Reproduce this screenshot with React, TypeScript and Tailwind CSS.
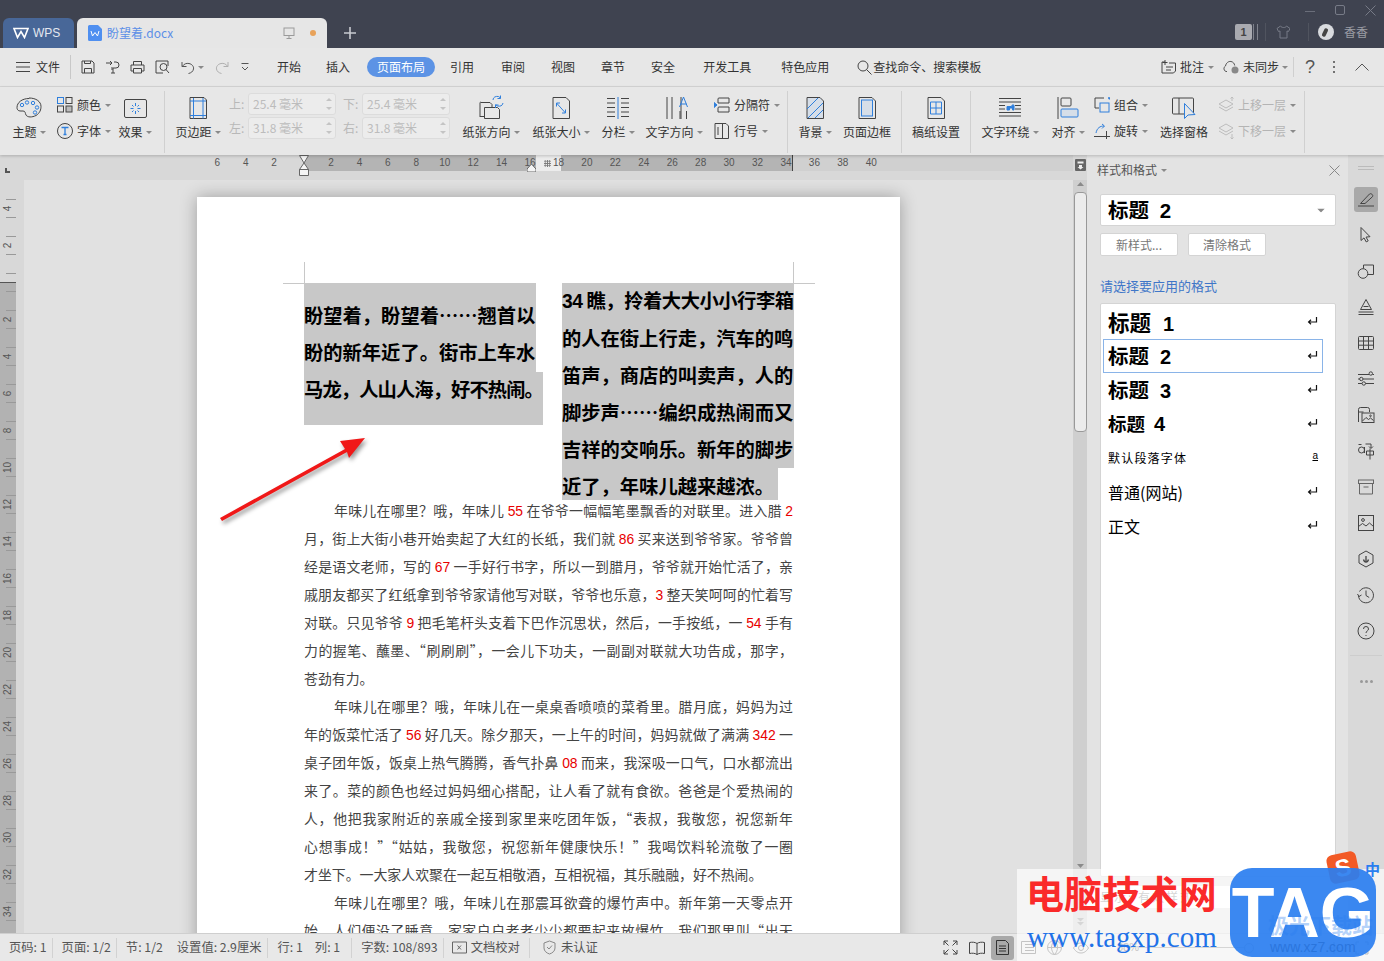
import type { FC, ReactNode } from 'react'

const BLUE = '#2f7fdc'
const INK = '#444'

const Svg: FC<{ w?: number; h?: number; stroke?: string; className?: string; children: ReactNode }> = ({ w = 16, h = 16, stroke = INK, className, children }) => (
  <svg width={w} height={h} viewBox={`0 0 ${w} ${h}`} fill="none" stroke={stroke} strokeWidth={1} className={`block shrink-0 ${className ?? ''}`}>
    {children}
  </svg>
)

const Caret: FC<{ className?: string }> = ({ className }) => (
  <svg width={6} height={3} viewBox="0 0 6 3" className={`block shrink-0 ${className ?? ''}`}><path d="M0 0h6L3 3z" fill="#8a8a8a" /></svg>
)

// big ribbon button: icon on top, label under it
const Big: FC<{ label: string; caret?: boolean; className: string; children: ReactNode }> = ({ label, caret, className, children }) => (
  <div className={`flex shrink-0 flex-col items-center ${className}`}>
    <div className="flex h-[36px] items-center pt-[6px]">{children}</div>
    <div className="flex h-[18px] items-center gap-[3px] whitespace-nowrap text-[12px] text-[#333]">
      {label}
      {caret && <Caret />}
    </div>
  </div>
)

const Small: FC<{ label: string; muted?: boolean; children: ReactNode }> = ({ label, muted, children }) => (
  <div className={`flex h-[18px] items-center whitespace-nowrap text-[12px] ${muted ? 'text-[#b4b4b4]' : 'text-[#333]'}`}>
    <div className="flex w-[20px] items-center">{children}</div>
    <span>{label}</span>
    <Caret className="ml-[4px]" />
  </div>
)

const Sep = () => <div className="mt-[4px] h-[62px] w-px shrink-0 bg-[#d0d0d0]" />

const Field: FC<{ label: string; value: string }> = ({ label, value }) => (
  <div className="flex items-center">
    <span className="w-[19px] text-[12px] text-[#b8b8b8]">{label}</span>
    <div className="flex h-[22px] w-[88px] items-center justify-between rounded-[3px] border border-[#dcdcdc] bg-[#ececec] pl-[4px] pr-[3px] text-[12px] text-[#bcbcbc]">
      {value}
      <div className="flex flex-col gap-[6px]">
        <svg width={6} height={3} viewBox="0 0 6 3"><path d="M3 0l3 3H0z" fill="#c4c4c4" /></svg>
        <svg width={6} height={3} viewBox="0 0 6 3"><path d="M0 0h6L3 3z" fill="#c4c4c4" /></svg>
      </div>
    </div>
  </div>
)

const HRULER = ['6', '4', '2', '', '2', '4', '6', '8', '10', '12', '14', '16', '18', '20', '22', '24', '26', '28', '30', '32', '34', '36', '38', '40']
const VRULER = ['4', '2', '', '2', '4', '6', '8', '10', '12', '14', '16', '18', '20', '22', '24', '26', '28', '30', '32', '34']

const R: FC<{ children: ReactNode }> = ({ children }) => <span className="font-['Liberation_Sans',sans-serif] text-[#e80000]">{children}</span>

const Line: FC<{ indent?: boolean; last?: boolean; children: ReactNode }> = ({ indent, last, children }) => (
  <div className={`h-[28px] whitespace-nowrap leading-[28px] ${indent ? 'pl-[30px]' : ''} ${last ? '' : '[text-align-last:justify]'}`}>{children}</div>
)

const STYLES = [
  { name: '标题', n: '1', cls: 'text-[21.5px] font-bold', numCls: 'ml-[12px]' },
  { name: '标题', n: '2', cls: 'text-[20.5px] font-bold', numCls: 'ml-[11px]', selected: true },
  { name: '标题', n: '3', cls: 'text-[20.5px] font-bold', numCls: 'ml-[11px]' },
  { name: '标题', n: '4', cls: 'text-[18.5px] font-bold', numCls: 'ml-[9px]' },
  { name: '默认段落字体', cls: 'text-[12px] tracking-[1.2px]', a: true },
  { name: '普通(网站)', cls: 'text-[16px]' },
  { name: '正文', cls: 'text-[16px]' },
]

const ReturnMark = () => (
  <Svg w={11} h={10} stroke="#111" className="-mt-[3px] [&_path]:[stroke-width:1.2]"><path d="M9.5 1v5H2M4 3.800L1.600 6 4 8.200" /></Svg>
)

const RAIL: ReactNode[] = [
  <Svg w={18} h={18} stroke="#444"><path d="M3.500 13.500L12.500 4c1.200-1.200 4.300 1 3 2.700L8 13.500zM1 16h16" /></Svg>,
  <Svg w={18} h={18}><path d="M4 1.500v13l3-2.600 2.200 4 2-1-2.200-3.800 4-.4z" /></Svg>,
  <Svg w={18} h={18}><circle cx="6" cy="11.500" r="4.800" /><path d="M6.500 6.500V3h10v9.500H11" /></Svg>,
  <Svg w={18} h={18}><path d="M9 1.500L14.500 11.500H3.500zM6.500 8.500h5M1.500 14h15M1.500 16.500h15" /></Svg>,
  <Svg w={18} h={18}><rect x="1.500" y="2.500" width="15" height="13" rx="1" /><path d="M1.500 7h15M1.500 11.200h15M6.500 2.500v13M11.500 2.500v13" /></Svg>,
  <Svg w={18} h={18}><path d="M1 4.500h11M15.500 4.500h1.500M1 9h1.500M6 9h11M1 13.500h4M8.500 13.500h8.500" /><circle cx="13.800" cy="3.500" r="1.700" /><circle cx="4.300" cy="9" r="1.700" /><circle cx="6.800" cy="13.500" r="1.700" /></Svg>,
  <Svg w={18} h={18}><path d="M1.500 16V3.500a2 2 0 012-2h7a2 2 0 012 2V6M1.500 6h5" /><rect x="5" y="7" width="12" height="9.500" /><path d="M5.500 15l3.500-3.500 2.500 2 2-1.500 3 2.500" /><circle cx="13.500" cy="9.800" r=".8" /></Svg>,
  <Svg w={18} h={18}><circle cx="4.500" cy="8" r="3" /><path d="M7.500 5v6M1.500 2.500h3M8.500 2h5.500v4M12 4.500L14 6.500 16 4.500M9.500 9h7v4h-7zM13 6.500v11" /></Svg>,
  <Svg w={18} h={18} stroke="#666"><rect x="1.500" y="2" width="15" height="3.500" /><path d="M2.500 5.500V16h13V5.500M6.500 9h5" /></Svg>,
  <Svg w={18} h={18}><rect x="1.500" y="1.500" width="15" height="15" /><circle cx="6" cy="6" r="1.400" /><path d="M1.500 12.500l4-3 3.500 2.500 3.500-3 4 3.500" /></Svg>,
  <Svg w={18} h={18}><path d="M9 1l7 4v8l-7 4-7-4V5z" /><path d="M9 6v5M6.500 9.500c.5 2 1.500 2.500 2.500 2.500s2-.5 2.500-2.500" strokeWidth={1.300} /></Svg>,
  <Svg w={18} h={18}><path d="M2.500 5.500A7.500 7.500 0 111.500 10M.5 8l1.500 2.500L4.500 9M9 4.500V9.500l3.200 2" /></Svg>,
  <Svg w={18} h={18}><circle cx="9" cy="9" r="8" /><path d="M6.500 7a2.500 2.500 0 115 0c0 1.800-2.500 2-2.500 4M9 13v1" /></Svg>,
]

export default function App() {
  return (
    <div className="relative flex h-[961px] w-[1384px] flex-col overflow-hidden bg-[#e0e0e0] font-['Noto_Sans_CJK_SC','Noto_Sans',sans-serif]">
      {/* Title bar */}
      <header className="flex h-[48px] shrink-0 items-end bg-[#3f4350]">
        <div className="ml-[3px] flex h-[30px] w-[71px] items-center gap-[4px] rounded-t-[6px] bg-[#486798] pl-[10px] font-['Liberation_Sans',sans-serif] text-[12px] text-[#e4e8f0]">
          <Svg w={16} h={12} stroke="#fff" className="[&_path]:[stroke-width:1.6]"><path d="M1 1.500h14l-3.500 9L8 4.500l-3.500 6z" /></Svg>
          WPS
        </div>
        <div className="ml-[3px] flex h-[30px] w-[250px] items-center rounded-t-[6px] bg-[#e6e6e6] pl-[11px]">
          <svg width={14} height={16} viewBox="0 0 14 16" className="block shrink-0"><path d="M1.500 0H10l4 4v10.500a1.500 1.500 0 01-1.500 1.500h-11A1.500 1.500 0 010 14.500v-13A1.500 1.500 0 011.500 0z" fill="#4f8ff0" /><path d="M3 6l1.500 5L7 7.500 9.500 11 11 6" stroke="#fff" fill="none" /></svg>
          <span className="ml-[5px] text-[12px] text-[#5c8fe6]">盼望着.docx</span>
          <Svg w={12} h={12} stroke="#9a9a9a" className="ml-[110px]"><rect x="1" y="1" width="10" height="7.500" /><path d="M6 8.500V11M3.500 11.500h5" /></Svg>
          <div className="ml-[15px] h-[6px] w-[6px] rounded-full bg-[#e8a25a]" />
        </div>
        <Svg w={12} h={12} stroke="#c8cad0" className="mb-[9px] ml-[17px] [&_path]:[stroke-width:1.6]"><path d="M6 0v12M0 6h12" /></Svg>
        <div className="ml-auto flex h-full flex-col pr-[8px]">
          <div className="flex h-[20px] items-center justify-end gap-[20px]">
            <div className="h-px w-[10px] translate-y-[1px] bg-[#6a6e7a]" />
            <div className="h-[10px] w-[10px] rounded-[2px] border border-[#777b87]" />
            <Svg w={11} h={11} stroke="#777b87"><path d="M0.500 0.500l10 10M10.500 0.500l-10 10" /></Svg>
          </div>
          <div className="flex h-[26px] items-center pb-[2px]">
            <div className="flex h-[16px] w-[17px] items-center justify-center rounded-[2px] bg-[#a9aab0] font-['Liberation_Sans',sans-serif] text-[11px] font-bold text-[#444]">1</div>
            <div className="ml-px h-[16px] w-[5px] border-x border-[#7f828c]" />
            <div className="ml-[7px] h-[18px] w-px bg-[#50545f]" />
            <Svg w={14} h={14} stroke="#777b87" className="ml-[10px]"><path d="M4.500 1L1 3.500l1.500 3L4 6v7h7V6l1.500.5L14 3.500 10.500 1c-.5 2-5 2-6 0z" /></Svg>
            <div className="ml-[18px] h-[18px] w-px bg-[#50545f]" />
            <div className="relative ml-[9px] h-[16px] w-[16px] rounded-full bg-[#d8dade]"><div className="absolute left-[5px] top-[4px] h-[9px] w-[4px] rotate-[25deg] rounded-full bg-[#444]" /></div>
            <span className="ml-[10px] text-[12px] text-[#9a9ca4]">香香</span>
            <div className="w-[8px]" />
          </div>
        </div>
      </header>

      {/* Menu row */}
      <div className="flex h-[39px] shrink-0 items-center border-b border-[#d6d6d6] bg-[#e7e7e7] text-[12px] text-[#333]">
        <Svg w={14} h={10} className="ml-[16px]"><path d="M0 .5h14M0 5h14M0 9.500h14" /></Svg>
        <span className="ml-[6px]">文件</span>
        <div className="ml-[10px] h-[24px] w-px bg-[#c8c8c8]" />
        <Svg w={14} h={14} className="ml-[10px]"><path d="M1 1h10l2 2v10H1zM3.500 13V8.500h7V13M3.500 1v2.500h6V1" /></Svg>
        <Svg w={14} h={14} className="ml-[11px]"><path d="M0 3h6M4 1l2 2-2 2M8 2h2a3 3 0 010 6H7v5M5 13h4M6 7v3" /></Svg>
        <Svg w={15} h={14} className="ml-[10px]"><path d="M3.500 5V1.500h8V5M3.500 11H1V5h13v6h-2.500M3.500 8.500h8V13h-8z" /></Svg>
        <Svg w={15} h={14} className="ml-[10px]"><path d="M13 6V1H1v12h7" /><circle cx="8.500" cy="7" r="3.500" /><path d="M11 9.500l3 3.500" /></Svg>
        <Svg w={14} h={13} stroke="#555" className="ml-[11px]"><path d="M1 1v4.500h4.500M1.200 5.500C3 2.800 5.500 2 8 2.500c3 .6 5 3 4.500 5.500-.4 2.500-2.500 4-5 4.500" /></Svg>
        <Caret className="ml-[3px]" />
        <Svg w={14} h={13} stroke="#b0b0b0" className="ml-[11px]"><path d="M13 1v4.500H8.500M12.800 5.500C11 2.800 8.500 2 6 2.500 3 3.100 1 5.500 1.500 8c.4 2.500 2.500 4 5 4.500" /></Svg>
        <Svg w={8} h={8} stroke="#555" className="ml-[12px]"><path d="M0.500 .5h7M1 4l3 3 3-3" /></Svg>
        <span className="ml-[28px]">开始</span>
        <span className="ml-[25px]">插入</span>
        <span className="ml-[17px] flex h-[20px] w-[68px] items-center justify-center rounded-full bg-[#5c93e5] text-white">页面布局</span>
        <span className="ml-[15px]">引用</span>
        <span className="ml-[27px]">审阅</span>
        <span className="ml-[26px]">视图</span>
        <span className="ml-[26px]">章节</span>
        <span className="ml-[26px]">安全</span>
        <span className="ml-[28px]">开发工具</span>
        <span className="ml-[30px]">特色应用</span>
        <Svg w={15} h={15} className="ml-[28px]"><circle cx="6" cy="6" r="5" /><path d="M9.500 9.500l5 5" /></Svg>
        <span className="ml-px">查找命令、搜索模板</span>
        <div className="ml-auto flex items-center">
          <Svg w={16} h={14}><path d="M4 2H1v11h11.500l2-2V3H8M4 0v5M1.500 2.500h5M5 7h7M5 10h5" /></Svg>
          <span className="ml-[3px]">批注</span>
          <Caret className="ml-[4px]" />
          <Svg w={17} h={14} stroke="#555" className="ml-[9px]"><path d="M4 11.500H3a3 3 0 01-.5-5.500C3 3 5.500 1 8 1.500c2 .3 3.500 2 3.700 4" /><circle cx="12" cy="10" r="3.500" fill="#888" stroke="none" /></Svg>
          <span className="ml-[3px]">未同步</span>
          <Caret className="ml-[3px]" />
          <div className="ml-[5px] h-[20px] w-px bg-[#cfcfcf]" />
          <span className="ml-[11px] font-['Liberation_Sans',sans-serif] text-[18px] text-[#555]">?</span>
          <Svg w={4} h={14} stroke="#555" className="ml-[17px] [&_path]:[stroke-width:1.6]"><path d="M2 1v2M2 6v2M2 11v2" /></Svg>
          <Svg w={14} h={8} stroke="#555" className="ml-[19px] mr-[15px]"><path d="M0.500 7.500L7 1l6.500 6.500" /></Svg>
        </div>
      </div>

      {/* Ribbon */}
      <div className="relative z-10 flex h-[68px] shrink-0 bg-[#e7e7e7] shadow-[0_1px_3px_rgba(0,0,0,0.2)]">
        <Big label="主题" caret className="ml-[8px] w-[42px]">
          <Svg w={26} h={22}><path d="M13 1.500C6 1.500 1 5.500 1 10.500c0 4 3.500 3.500 6 3.500 2.500 0 2 2 3 4 1.500 2.500 6 2.500 10 .5 4-2.500 5-6 5-9 0-5-5-8.500-12-8.500z" /><circle cx="6" cy="8" r="1.700" stroke={BLUE} /><circle cx="11" cy="5.500" r="1.700" stroke={BLUE} /><circle cx="17" cy="6" r="1.700" stroke={BLUE} /><circle cx="21" cy="10.500" r="1.700" stroke={BLUE} /><circle cx="19" cy="15.500" r="1.700" stroke={BLUE} /></Svg>
        </Big>
        <div className="ml-[7px] flex w-[58px] shrink-0 flex-col gap-[8px] pt-[9px]">
          <Small label="颜色">
            <Svg w={16} h={16}><rect x=".5" y=".5" width="6" height="6" stroke={BLUE} /><rect x="9" y=".5" width="6" height="6" /><rect x=".5" y="9" width="6" height="6" /><rect x="9" y="9" width="6" height="6" fill="#bbb" /></Svg>
          </Small>
          <Small label="字体">
            <Svg w={16} h={16}><circle cx="8" cy="8" r="7.500" /><path d="M4.500 4.500h7M8 4.500v7M6.500 11.500h3" stroke={BLUE} strokeWidth={1.300} /></Svg>
          </Small>
        </div>
        <Big label="效果" caret className="w-[40px]">
          <Svg w={23} h={19}><rect x=".5" y=".5" width="22" height="18" rx="1.500" /><path d="M11.500 4v3M11.500 12v3M6.500 9.500h3M13.500 9.500h3M8 6l1.500 1.500M15 6l-1.500 1.500M8 13l1.500-1.500M15 13l-1.500-1.500" stroke={BLUE} /></Svg>
        </Big>
        <div className="ml-[9px]"><Sep /></div>
        <Big label="页边距" caret className="ml-[3px] w-[60px]">
          <Svg w={18} h={22}><path d="M1 .5h14l2.500 2.500v18.500H1z" /><path d="M4.500 1v20.500M14 1v20.500M1 4h16M1 18.500h16" stroke={BLUE} /></Svg>
        </Big>
        <div className="ml-px flex shrink-0 flex-col gap-[2px] pt-[6px]">
          <div className="flex gap-[7px]"><Field label="上:" value="25.4 毫米" /><Field label="下:" value="25.4 毫米" /></div>
          <div className="flex gap-[7px]"><Field label="左:" value="31.8 毫米" /><Field label="右:" value="31.8 毫米" /></div>
        </div>
        <Big label="纸张方向" caret className="ml-[11px] w-[60px]">
          <Svg w={25} h={26}><path d="M2 7.500h9l2 2v3.500M1 8v14M1 8a1 1 0 011-1" /><path d="M5.500 12.500h13l2 2v9h-15z M1 21.500h4" /><path d="M14 5c0-3 3-4 5.500-3.500l2 1.500M21.500 .5v3h-3M24 8c-.5 3-3 3.500-5.500 3l-2-1.500M16.500 13v-3h3" stroke={BLUE} /></Svg>
        </Big>
        <Big label="纸张大小" caret className="ml-[10px] w-[60px]">
          <Svg w={18} h={22}><path d="M1 .5h13l3.500 3.500v17.500H1z" /><path d="M4.500 6l9 10M4.500 6v3.500M4.500 6H8M13.500 16v-3.500M13.500 16H10" stroke={BLUE} /></Svg>
        </Big>
        <Big label="分栏" caret className="ml-[5px] w-[44px]">
          <Svg w={24} h={22}><path d="M1 1.500h8M1 6h8M1 10.500h8M1 15h8M1 19.500h8M15 1.500h8M15 6h8M15 10.500h8M15 15h8M15 19.500h8" /><path d="M12 0v22" stroke={BLUE} /></Svg>
        </Big>
        <Big label="文字方向" caret className="ml-[4px] w-[60px]">
          <Svg w={22} h={22} className="ml-[6px]"><path d="M1 0v22M6 0v22M15 0v22M20 0" /><path d="M13.500 10L17.500 0l4 10M14.500 7h6" stroke={BLUE} /><path d="M14 14v8M20.500 14v8" /></Svg>
        </Big>
        <div className="ml-[10px] flex w-[68px] shrink-0 flex-col gap-[8px] pt-[9px]">
          <Small label="分隔符">
            <Svg w={16} h={16}><path d="M4 6V2a1 1 0 011-1h10v5H4M4 15v-4a1 1 0 011-1h10v5H4" /><path d="M0 5.500l3 2.500-3 2.500z" fill={BLUE} stroke={BLUE} /></Svg>
          </Small>
          <Small label="行号">
            <Svg w={15} h={16}><path d="M1 .5h11l2.500 2.500v12.500H1z" /><path d="M8.500 1v14M4 4v8" /></Svg>
          </Small>
        </div>
        <div className="ml-[5px]"><Sep /></div>
        <Big label="背景" caret className="ml-[5px] w-[44px]">
          <Svg w={18} h={22}><path d="M1 .5h13l3.500 3.500v17.500H1z" fill="#d6dee8" /><path d="M1 12L12 1M2 21L17 6M9 21l8-8" stroke={BLUE} /></Svg>
        </Big>
        <Big label="页面边框" className="ml-[5px] w-[50px]">
          <Svg w={18} h={22}><path d="M1 .5h13l3.500 3.500v17.500H1z" /><rect x="3.500" y="3" width="11" height="16" stroke={BLUE} fill="#d6dee8" /></Svg>
        </Big>
        <div className="ml-[9px]"><Sep /></div>
        <Big label="稿纸设置" className="ml-[9px] w-[50px]">
          <Svg w={18} h={22}><path d="M1 .5h13l3.500 3.500v17.500H1z" /><path d="M3.500 5h11v12h-11zM3.500 11h11M9 5v12" stroke={BLUE} /></Svg>
        </Big>
        <div className="ml-[9px]"><Sep /></div>
        <Big label="文字环绕" caret className="ml-[9px] w-[60px]">
          <Svg w={22} h={20}><path d="M0 .5h22M0 4h22M0 7.500h6M16 7.500h6M0 11h6M16 11h6M0 14.500h22M0 18h22" /><path d="M8 12V8.500h4l2-2 1 1v4.500h-1.500v-2h-3v2z" fill={BLUE} stroke={BLUE} /></Svg>
        </Big>
        <Big label="对齐" caret className="ml-[8px] w-[40px]">
          <Svg w={22} h={22}><path d="M1 0v22" /><rect x="4" y="1" width="10" height="8" rx="1" /><rect x="4" y="12" width="17" height="8" rx="1" fill="#d6dee8" stroke={BLUE} /></Svg>
        </Big>
        <div className="ml-[6px] flex w-[60px] shrink-0 flex-col gap-[8px] pt-[9px]">
          <Small label="组合">
            <Svg w={16} h={16}><path d="M10 1H1v10h4" /><rect x="6" y="6" width="9" height="9" stroke={BLUE} /><path d="M14 1h1.500v1.500" stroke={BLUE} strokeWidth={1.500} /></Svg>
          </Small>
          <Small label="旋转">
            <Svg w={16} h={16}><path d="M2 10C3 5 6 3 10 3M8 1l2.500 2L8 5.500" stroke={BLUE} /><path d="M0 13.500h16M12.500 8v8" /></Svg>
          </Small>
        </div>
        <Big label="选择窗格" className="ml-[5px] w-[50px]">
          <Svg w={24} h={22}><rect x=".5" y="1" width="21" height="16" rx="1" /><path d="M7 1v16" /><path d="M12.500 6.500v15l3.500-3.500 7-.5z" fill="#e7e7e7" stroke={BLUE} /></Svg>
        </Big>
        <div className="ml-[9px] flex w-[80px] shrink-0 flex-col gap-[8px] pt-[9px]">
          <Small label="上移一层" muted>
            <Svg w={17} h={16} stroke="#bdbdbd"><path d="M8 3l7 4-7 4-7-4zM1 10l7 4 7-4M14 4V0M12.500 1.500L14 0l1.500 1.500" /></Svg>
          </Small>
          <Small label="下移一层" muted>
            <Svg w={17} h={16} stroke="#bdbdbd"><path d="M8 1l7 4-7 4-7-4zM1 8l7 4 7-4M14 11v5M12.500 14.500L14 16l1.500-1.500" /></Svg>
          </Small>
        </div>
        <div className="ml-[6px]"><Sep /></div>
      </div>

      {/* Work area */}
      <div className="flex min-h-0 flex-1">
        <div className="flex w-[1087px] shrink-0 flex-col">
          {/* Horizontal ruler */}
          <div className="relative h-[25px] shrink-0 bg-[#d8d8d8]">
            <div className="flex h-[16px] bg-[linear-gradient(to_right,#d8d8d8_304px,#b4b4b4_304px,#b4b4b4_536px,#ececec_536px,#ececec_561px,#b4b4b4_561px,#b4b4b4_793px,#d0d0d0_793px,#d0d0d0_1073px,#d8d8d8_1073px)] pl-[203px] font-['Liberation_Sans',sans-serif] text-[10px] leading-[16px] text-[#555]">
              {HRULER.map((n, i) => <span key={i} className="w-[28.45px] shrink-0 text-center">{n}</span>)}
            </div>
            <div className="absolute left-[792px] top-0 h-[16px] w-px bg-[#444]" />
            <svg width={10} height={22} viewBox="0 0 10 22" className="absolute left-[299px] top-0"><path d="M.5.5h9L5 8zM5 8l4.500 6.500h-9zM.5 14.500h9v6h-9z" fill="#f4f4f4" stroke="#666" /></svg>
            <svg width={9} height={8} viewBox="0 0 9 8" className="absolute left-[527px] top-[9px]"><path d="M4.500 0L9 5v3H0V5z" fill="#f4f4f4" stroke="#666" /></svg>
            <div className="absolute left-[544px] top-[5px] h-[7px] w-[7px] bg-[radial-gradient(#777_1px,transparent_1px)] bg-[length:2.300px_2.300px]" />
            <div className="absolute left-[5px] top-[13px] h-[5px] w-[5px] border-b-2 border-l-2 border-[#555]" />
            <svg width={12} height={13} viewBox="0 0 12 13" className="absolute left-[1075px] top-[4px]"><rect width="11" height="12" rx="1" fill="#666" /><path d="M2.500 2.500h6v2h-6zM4 6h3v2h1.500L5.500 10.500 2.500 8H4z" fill="#eee" /></svg>
          </div>
          <div className="flex min-h-0 flex-1">
            {/* Vertical ruler */}
            <div className="h-full w-[24px] shrink-0 bg-[#d8d8d8]">
              <div className="h-full w-[16px] bg-[linear-gradient(to_bottom,#d8d8d8_102px,#555_102px,#555_103px,#b2b2b2_103px)] pt-[9.500px] font-['Liberation_Sans',sans-serif] text-[10px] text-[#555]">
                {VRULER.map((n, i) => (
                  <div key={i} className="flex h-[37px] flex-col items-end py-[9px]">
                    <div className="h-px w-[10px] bg-[#999]" />
                    <div className="flex w-[16px] flex-1 items-center justify-center pr-[1px]">
                      <span className="-rotate-90">{n}</span>
                    </div>
                    <div className="h-px w-[10px] bg-[#999]" />
                  </div>
                ))}
              </div>
            </div>
            {/* Page */}
            <div className="min-w-0 flex-1 overflow-hidden bg-[#e1e1e1] pl-[173px] pt-[17px]">
              <div className="relative h-[900px] w-[703px] bg-white pl-[107px] pt-[86px] shadow-[0_0_16px_rgba(0,0,0,0.3)]">
                <div className="absolute left-[107px] top-[65px] h-[21px] w-px bg-[#c8c8c8]" />
                <div className="absolute left-[86px] top-[86px] h-px w-[21px] bg-[#c8c8c8]" />
                <div className="absolute left-[596px] top-[65px] h-[21px] w-px bg-[#c8c8c8]" />
                <div className="absolute left-[596px] top-[86px] h-px w-[22px] bg-[#c8c8c8]" />
                <svg width={160} height={100} viewBox="0 0 160 100" className="absolute left-[20px] top-[235px] drop-shadow-[2px_3px_2px_rgba(0,0,0,0.4)]">
                  <path d="M3 86L128 17 123 9 148 6 132 26 130 20 5 89z" fill="#f01818" />
                </svg>
                <div className="flex h-[216px] gap-[19px] text-[19.300px] font-bold leading-[37px] text-black">
                  <div className="w-[239px] shrink-0">
                    <div className="h-[52px] w-[232px] whitespace-nowrap bg-[#c8c8c8] pt-[14px]">盼望着，盼望着……翘首以</div>
                    <div className="h-[37px] w-[232px] whitespace-nowrap bg-[#c8c8c8] leading-[35px]">盼的新年近了。街市上车水</div>
                    <div className="h-[53px] w-[239px] whitespace-nowrap bg-[#c8c8c8] leading-[35px] tracking-[-0.900px]">马龙，人山人海，好不热闹。</div>
                  </div>
                  <div className="w-[232px] shrink-0 bg-[linear-gradient(#c8c8c8_185px,transparent_185px)]">
                    <div className="-mt-px">
                      <div className="whitespace-nowrap tracking-[-0.450px]"><span className="font-['Liberation_Sans',sans-serif]">34</span> 瞧，拎着大大小小行李箱</div>
                      <div className="whitespace-nowrap">的人在街上行走，汽车的鸣</div>
                      <div className="whitespace-nowrap">笛声，商店的叫卖声，人的</div>
                      <div className="whitespace-nowrap">脚步声……编织成热闹而又</div>
                      <div className="whitespace-nowrap">吉祥的交响乐。新年的脚步</div>
                      <div className="h-[32px] w-[216px] whitespace-nowrap bg-[#c8c8c8]">近了，年味儿越来越浓。</div>
                    </div>
                  </div>
                </div>
                <div className="-mt-[3px] w-[489px] text-[13.900px] text-[#444]">
                  <Line indent>年味儿在哪里？哦，年味儿 <R>55</R> 在爷爷一幅幅笔墨飘香的对联里。进入腊 <R>2</R></Line>
                  <Line>月，街上大街小巷开始卖起了大红的长纸，我们就 <R>86</R> 买来送到爷爷家。爷爷曾</Line>
                  <Line>经是语文老师，写的 <R>67</R> 一手好行书字，所以一到腊月，爷爷就开始忙活了，亲</Line>
                  <Line>戚朋友都买了红纸拿到爷爷家请他写对联，爷爷也乐意，<R>3</R> 整天笑呵呵的忙着写</Line>
                  <Line>对联。只见爷爷 <R>9</R> 把毛笔杆头支着下巴作沉思状，然后，一手按纸，一 <R>54</R> 手有</Line>
                  <Line>力的握笔、蘸墨、“刷刷刷”，一会儿下功夫，一副副对联就大功告成，那字，</Line>
                  <Line last>苍劲有力。</Line>
                  <Line indent>年味儿在哪里？哦，年味儿在一桌桌香喷喷的菜肴里。腊月底，妈妈为过</Line>
                  <Line>年的饭菜忙活了 <R>56</R> 好几天。除夕那天，一上午的时间，妈妈就做了满满 <R>342</R> 一</Line>
                  <Line>桌子团年饭，饭桌上热气腾腾，香气扑鼻 <R>08</R> 而来，我深吸一口气，口水都流出</Line>
                  <Line>来了。菜的颜色也经过妈妈细心搭配，让人看了就有食欲。爸爸是个爱热闹的</Line>
                  <Line>人，他把我家附近的亲戚全接到家里来吃团年饭，“表叔，我敬您，祝您新年</Line>
                  <Line>心想事成！”“姑姑，我敬您，祝您新年健康快乐！”我喝饮料轮流敬了一圈</Line>
                  <Line last>才坐下。一大家人欢聚在一起互相敬酒，互相祝福，其乐融融，好不热闹。</Line>
                  <Line indent>年味儿在哪里？哦，年味儿在那震耳欲聋的爆竹声中。新年第一天零点开</Line>
                  <Line>始，人们便没了睡意，家家户户老老少少都要起来放爆竹。我们那里叫“出天</Line>
                </div>
              </div>
            </div>
            {/* Scrollbar */}
            <div className="flex h-full w-[14px] shrink-0 flex-col items-center bg-[#cfcfcf]">
              <svg width={7} height={4} viewBox="0 0 7 4" className="mt-[2px]"><path d="M3.500 0L7 4H0z" fill="#8a8a8a" /></svg>
              <div className="mt-[6px] h-[240px] w-[13px] rounded-[4px] border border-[#999] bg-[#ececec]" />
              <svg width={7} height={4} viewBox="0 0 7 4" className="mt-[432px]"><path d="M0 0h7L3.500 4z" fill="#8a8a8a" /></svg>
              <svg width={7} height={8} viewBox="0 0 7 8" className="mt-[50px]"><path d="M0 0h7L3.500 3.500zM0 4h7L3.500 7.500z" fill="#8a8a8a" /></svg>
            </div>
          </div>
        </div>

        {/* Styles panel */}
        <aside className="flex w-[261px] shrink-0 flex-col bg-[#e3e3e3] pl-[13px] pr-[12px]">
          <div className="-ml-[3px] -mr-[4px] flex h-[30px] shrink-0 items-center text-[12px] text-[#555]">
            样式和格式
            <Caret className="ml-[4px]" />
            <Svg w={11} h={11} stroke="#888" className="ml-auto"><path d="M.5.5l10 10M10.500.5l-10 10" /></Svg>
          </div>
          <div className="mt-[9px] flex h-[32px] shrink-0 items-center justify-between rounded-[2px] border border-[#d4d4d4] bg-white pl-[7px] pr-[11px] text-[20.500px] font-bold text-black">
            <span>标题 <span className="ml-[6px] font-['Liberation_Sans',sans-serif]">2</span></span>
            <Caret className="scale-[1.300]" />
          </div>
          <div className="mt-[7px] flex shrink-0 gap-[10px]">
            <div className="flex h-[23px] w-[78px] items-center justify-center rounded-[2px] border border-[#d4d4d4] bg-white text-[12px] text-[#777]">新样式...</div>
            <div className="flex h-[23px] w-[78px] items-center justify-center rounded-[2px] border border-[#d4d4d4] bg-white text-[12px] text-[#777]">清除格式</div>
          </div>
          <div className="mt-[20px] flex h-[20px] shrink-0 items-center text-[13px] text-[#3f76c8]">请选择要应用的格式</div>
          <div className="mt-[7px] h-[574px] shrink-0 rounded-[2px] border border-[#d4d4d4] bg-white pl-[2px] pt-[1px] text-black">
            {STYLES.map((s, i) => (
              <div key={i} className={`flex h-[34px] w-[220px] items-center justify-between pl-[4px] pr-[4px] ${s.selected ? 'border border-[#8ab4e8]' : 'border border-transparent'}`}>
                <span className={`whitespace-nowrap ${s.cls}`}>
                  {s.name}
                  {s.n && <span className={`${s.numCls} font-['Liberation_Sans',sans-serif] text-[20px]`}>{s.n}</span>}
                </span>
                {s.a ? <span className="-mt-[4px] font-['Liberation_Sans',sans-serif] text-[10px] leading-[10px] underline">a</span> : <ReturnMark />}
              </div>
            ))}
          </div>
          <div className="-ml-[13px] -mr-[12px] mt-[9px] flex h-[22px] shrink-0 items-center bg-white pl-[13px] text-[12px] tracking-[2px] text-[#888]">显示: 有效样式</div>
        </aside>

        {/* Right rail */}
        <div className="flex w-[36px] shrink-0 flex-col items-center bg-[#d9d9d9]">
          <div className="mt-[11px] h-[4px] w-[16px] border-y border-[#bbb]" />
          <div className="mt-[11px] flex flex-col">
            {RAIL.map((icon, i) => (
              <div key={i} className="flex h-[36px] w-[24px] items-center justify-center">
                <div className={`flex h-[25px] w-[24px] items-center justify-center rounded-[3px] ${i === 0 ? 'bg-[#a9a9a9]' : ''}`}>{icon}</div>
              </div>
            ))}
          </div>
          <div className="mt-[6px] h-px w-[32px] bg-[#cdcdcd]" />
          <div className="mt-[24px] flex gap-[2px]">
            <div className="h-[3px] w-[3px] rounded-full bg-[#999]" />
            <div className="h-[3px] w-[3px] rounded-full bg-[#999]" />
            <div className="h-[3px] w-[3px] rounded-full bg-[#999]" />
          </div>
        </div>
      </div>

      {/* Status bar */}
      <footer className="flex h-[28px] shrink-0 items-center border-t border-[#cfcfcf] bg-[#e8e8e8] pl-[9px] text-[12.300px] text-[#555]">
        <span>页码: 1</span>
        <div className="ml-[5px] h-[20px] w-px bg-[#d2d2d2]" />
        <span className="ml-[9px]">页面: 1/2</span>
        <div className="ml-[5px] h-[20px] w-px bg-[#d2d2d2]" />
        <span className="ml-[9px]">节: 1/2</span>
        <span className="ml-[14px]">设置值: 2.9厘米</span>
        <div className="ml-[5px] h-[20px] w-px bg-[#d2d2d2]" />
        <span className="ml-[10px]">行: 1</span>
        <span className="ml-[12px]">列: 1</span>
        <div className="ml-[11px] h-[20px] w-px bg-[#d2d2d2]" />
        <span className="ml-[9px]">字数: 108/893</span>
        <div className="ml-[5px] h-[20px] w-px bg-[#d2d2d2]" />
        <Svg w={15} h={13} stroke="#666" className="ml-[8px]"><path d="M.5 1h14v11H.5zM5.500 4.500l3.500 4M9 4.500l-3.500 4" /></Svg>
        <span className="ml-[4px]">文档校对</span>
        <div className="ml-[9px] h-[20px] w-px bg-[#d2d2d2]" />
        <Svg w={13} h={15} stroke="#888" className="ml-[13px]"><path d="M6.500 1l5.500 2v5c0 3-2.500 5-5.500 6C3.500 13 1 11 1 8V3zM4 7l2 2 3-3.500" /></Svg>
        <span className="ml-[5px]">未认证</span>
        <Svg w={15} h={15} stroke="#444" className="ml-auto"><path d="M1 5V1h4M10 1h4v4M1 10v4h4M14 10v4h-4M1 1l4.500 4.500M14 1L9.500 5.500M1 14l4.500-4.500M14 14L9.500 9.500" /></Svg>
        <Svg w={16} h={14} stroke="#444" className="ml-[11px]"><path d="M8 2.500C6 1 3 1 .5 1.500v11C3 12 6 12 8 13.500c2-1.500 5-1.500 7.500-1V1.500C13 1 10 1 8 2.500zM8 2.500v11" /></Svg>
        <div className="ml-[6px] flex h-[24px] w-[23px] items-center justify-center rounded-[3px] bg-[#a9a9a9]">
          <Svg w={13} h={15} stroke="#333"><path d="M.5 .5h9l3 3v11H.5zM3 6h7M3 8.500h7M3 11h7" /></Svg>
        </div>
        <Svg w={15} h={13} stroke="#555" className="ml-[7px]"><path d="M.5.5h14v12H.5zM4 3.500h9M4 6.500h9M4 9.500h9" /></Svg>
        <Svg w={15} h={15} stroke="#555" className="ml-[11px]"><circle cx="7.500" cy="7.500" r="7" /><path d="M.5 7.500h14M7.500 .5c-4 4-4 10 0 14M7.500 .5c4 4 4 10 0 14" /></Svg>
        <Svg w={16} h={14} stroke="#555" className="ml-[11px]"><path d="M.5 7C3 3 5.500 2 8 2s5 1 7.500 5C13 11 10.500 12 8 12S3 11 .5 7z" /><circle cx="8" cy="7" r="2.500" /></Svg>
        <span className="ml-[28px] font-['Liberation_Sans',sans-serif] text-[11px]">88%</span>
        <div className="h-px w-[105px] bg-[#888]" />
        <div className="h-[10px] w-[10px] rounded-full border border-[#666]" />
        <Svg w={12} h={12} stroke="#333" className="ml-[74px]"><path d="M6 0v12M0 6h12" /></Svg>
        <Svg w={14} h={14} stroke="#444" className="ml-[15px] mr-[15px]"><path d="M1 4V1h3M10 1h3v3M1 10v3h3M13 10v3h-3" /></Svg>
      </footer>

      {/* Watermark */}
      <div className="absolute bottom-0 left-[1017px] h-[92px] w-[367px] bg-white/65">
        <div className="pl-[9px] text-[38px] font-bold leading-[46px] tracking-[0.200px] text-[#fa2a2a]">电脑技术网</div>
        <div className="mt-[6px] pl-[10px] font-['Liberation_Serif',serif] text-[29px] leading-[32px] text-[#1f72e8]">www.tagxp.com</div>
      </div>
      <div className="absolute left-[1328px] top-[853px] flex h-[29px] w-[30px] -rotate-12 items-center justify-center rounded-[6px] bg-[#f25a26] font-['Liberation_Sans',sans-serif] text-[24px] font-bold leading-none text-white">S</div>
      <div className="absolute left-[1365px] top-[860px] text-[15px] font-bold leading-[18px] text-[#2a7ef0]">中</div>
      <div className="absolute left-[1230px] top-[868px] flex h-[89px] w-[146px] items-center justify-center overflow-hidden rounded-[22px] bg-[#2a7ef0]/92 font-['Liberation_Sans',sans-serif] text-[70px] font-bold leading-none text-white">
        TAG
        <div className="absolute left-[38px] top-[44px] whitespace-nowrap font-['Noto_Sans_CJK_SC',sans-serif] text-[21px] leading-[24px] text-[#2a7ef0]/35">极光下载站</div>
        <div className="absolute left-[40px] top-[71px] whitespace-nowrap text-[14px] font-normal leading-[16px] text-[#1a62c8]/50">www.xz7.com</div>
      </div>
    </div>
  )
}
